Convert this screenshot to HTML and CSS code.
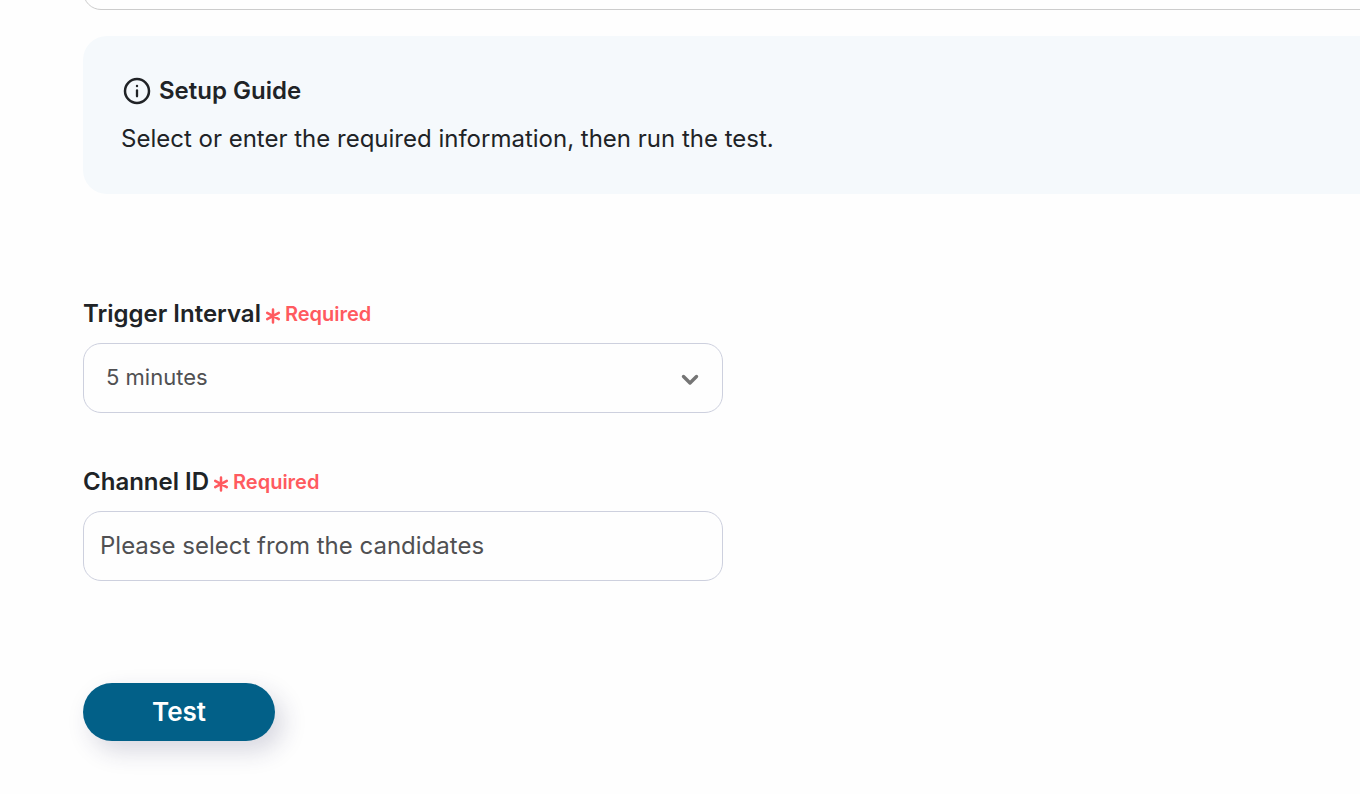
FILE: index.html
```
<!DOCTYPE html>
<html lang="en">
<head>
    <meta charset="UTF-8">
    <meta name="viewport" content="width=device-width, initial-scale=1.0">
    <title>Trigger Setup</title>
    <link rel="stylesheet" href="styles.css">
</head>
<body>
    <main class="setup">
        <input type="text" class="field field-wide" aria-label="Title">

        <section class="guide">
            <h2 class="guide-title">
                <svg class="guide-icon" viewBox="0 0 30 30" aria-hidden="true">
                    <circle cx="16" cy="15" r="12" fill="none" stroke="currentColor" stroke-width="2.5"/>
                    <circle cx="16" cy="10" r="1.2" fill="currentColor"/>
                    <path d="M16 14.500v5.800" stroke="currentColor" stroke-width="2.300" stroke-linecap="round"/>
                </svg>
                Setup Guide
            </h2>
            <p class="guide-text">Select or enter the required information, then run the test.</p>
        </section>

        <form class="form" onsubmit="return false">
            <div class="form-group">
                <div class="form-label">
                    <label for="interval">Trigger Interval</label>
                    <span class="required">
                        <svg class="asterisk" viewBox="0 0 16 16" aria-hidden="true">
                            <path d="M8 1.500v13M2.200 4.800l11.600 6.400M13.800 4.800L2.200 11.200" stroke="currentColor" stroke-width="2.500" stroke-linecap="round"/>
                        </svg>
                        Required
                    </span>
                </div>
                <div class="select-wrap">
                    <select id="interval" class="field select">
                        <option>5 minutes</option>
                        <option>10 minutes</option>
                        <option>15 minutes</option>
                    </select>
                    <svg class="chevron" viewBox="0 0 18 12" aria-hidden="true">
                        <path d="M2.500 2.500L9 9l6.500-6.500" fill="none" stroke="currentColor" stroke-width="3.400" stroke-linecap="round" stroke-linejoin="round"/>
                    </svg>
                </div>
            </div>

            <div class="form-group">
                <div class="form-label">
                    <label for="channel">Channel ID</label>
                    <span class="required">
                        <svg class="asterisk" viewBox="0 0 16 16" aria-hidden="true">
                            <path d="M8 1.500v13M2.200 4.800l11.600 6.400M13.800 4.800L2.200 11.200" stroke="currentColor" stroke-width="2.500" stroke-linecap="round"/>
                        </svg>
                        Required
                    </span>
                </div>
                <input type="text" id="channel" class="field" placeholder="Please select from the candidates">
            </div>

            <button type="submit" class="test-button">Test</button>
        </form>
    </main>
</body>
</html>
```

FILE: styles.css
```
* { box-sizing: border-box; }
body { margin: 0; background: #fefefe; color: #202326; font-family: Inter, "Liberation Sans", sans-serif; font-size: 24px; line-height: 32px; overflow-x: hidden; }

/* the panel starts above the fold and runs past the right edge */
.setup { margin: -60px -40px 0 83px; padding-bottom: 50px; }

.field { display: block; width: 100%; height: 70px; padding: 0 16px 2px; border: 1px solid #cdd0de; border-radius: 18px; background: #fefefe; color: #505052; font-family: inherit; font-size: 24px; }
.field::placeholder { color: #505052; opacity: 1; }
.field-wide { border-color: #ccc; }

.guide { margin-top: 26px; padding: 39px 38px; border-radius: 24px; background: #f5f9fc; }
.guide-title { display: flex; align-items: center; gap: 8px; margin: 0 0 16px; font-size: 24px; line-height: 32px; font-weight: 600; }
.guide-icon { width: 30px; height: 30px; }
.guide-text { margin: 0; }

.form { margin-top: 104px; }
.form-group { max-width: 640px; margin-bottom: 53px; }
.form-label { display: flex; align-items: center; gap: 4px; margin-bottom: 13px; font-weight: 600; }
.required { display: flex; align-items: center; gap: 4px; color: #ff5a5f; font-size: 20px; }
.asterisk { width: 16px; height: 16px; margin-top: 4px; }

.select-wrap { position: relative; }
.select { appearance: none; padding-left: 22px; font-size: 22px; cursor: pointer; }
.chevron { position: absolute; right: 24px; top: 31px; width: 18px; height: 12px; color: #757575; pointer-events: none; }

.test-button { width: 192px; height: 58px; margin-top: 49px; padding: 0 0 2px; border: none; border-radius: 29px; background: #026088; color: white; font-family: inherit; font-size: 26px; font-weight: 600; cursor: pointer; box-shadow: 8px 10px 24px rgba(40, 40, 90, 0.18); }
.test-button:hover { background: #024f70; }
```
